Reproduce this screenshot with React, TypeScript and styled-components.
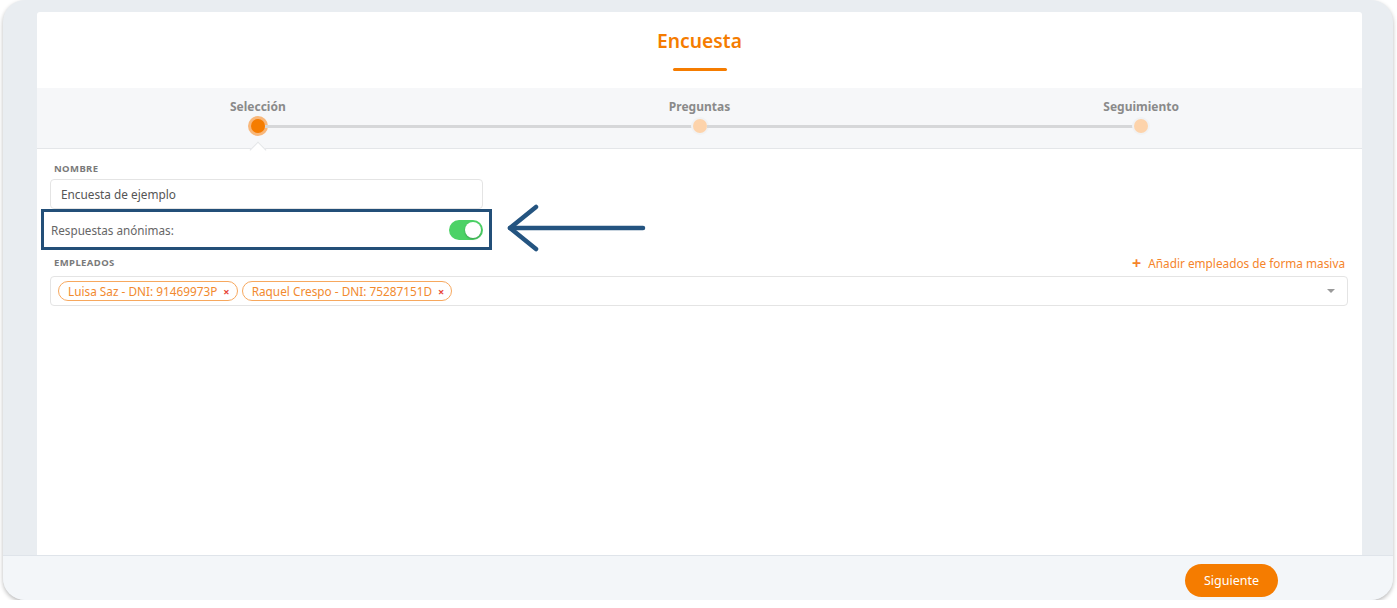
import * as React from 'react'
import styled, { createGlobalStyle } from 'styled-components'

const GlobalStyle = createGlobalStyle`
  body {
    margin: 0;
    background: #ffffff;
    font-family: "Noto Sans", "Open Sans", sans-serif;
  }
`

const Frame = styled.div`
  margin: 0 4px 0 3px;
  width: 1390px;
  height: 600px;
  background: #e9edf1;
  border-radius: 22px;
  box-shadow: 0 2px 4px rgba(0, 0, 0, 0.28);
  display: flex;
  flex-direction: column;
  overflow: hidden;
`

const Body = styled.div`
  flex: 1;
  padding: 12px 31px 0 34px;
  display: flex;
`

const Card = styled.div`
  flex: 1;
  background: #ffffff;
  border-radius: 3px 3px 0 0;
  display: flex;
  flex-direction: column;
`

const TitleBlock = styled.div`
  height: 76px;
  display: flex;
  flex-direction: column;
  align-items: center;
`

const Title = styled.h1`
  margin: 15px 0 0;
  font-size: 19.3px;
  line-height: 27px;
  font-weight: 600;
  color: #f57c00;
`

const TitleBar = styled.div`
  margin-top: 14px;
  width: 54px;
  height: 3px;
  border-radius: 2px;
  background: #f57c00;
`

const Stepper = styled.div`
  height: 60px;
  background: #f6f7f9;
  border-bottom: 1px solid #e4e6e9;
  display: grid;
  grid-template-columns: repeat(3, 1fr);
`

const Step = styled.div<{ $active?: boolean }>`
  position: relative;
  display: flex;
  flex-direction: column;
  align-items: center;
  padding-top: 10px;

  &::after {
    content: '';
    display: ${p => (p.$active ? 'block' : 'none')};
    position: absolute;
    left: 50%;
    bottom: -1px;
    width: 11px;
    height: 11px;
    background: #ffffff;
    border-left: 1px solid #e4e6e9;
    border-top: 1px solid #e4e6e9;
    transform: translate(-50%, 7px) rotate(45deg);
  }
`

const StepLabel = styled.div`
  font-size: 12px;
  line-height: 18px;
  font-weight: 700;
  color: #8a8a8a;
`

const Track = styled.div`
  margin-top: 1px;
  width: 100%;
  height: 18px;
  display: flex;
  align-items: center;
`

const Line = styled.div<{ $hidden?: boolean }>`
  flex: 1;
  height: 3px;
  background: ${p => (p.$hidden ? 'transparent' : '#d6d7d9')};
`

const Dot = styled.div<{ $active?: boolean }>`
  width: 14px;
  height: 14px;
  border-radius: 50%;
  background: ${p => (p.$active ? '#f57c00' : '#fdd3ab')};
  box-shadow: ${p =>
    p.$active ? '0 0 0 3px #f8b77a' : '0 0 0 2px #f1f2f4'};
`

const Form = styled.div`
  padding: 13px 14px 0 13px;
  display: flex;
  flex-direction: column;
`

const FieldLabel = styled.div`
  font-size: 9.5px;
  line-height: 14px;
  font-weight: 700;
  letter-spacing: 0.4px;
  color: #7a7a7a;
  padding-left: 4px;
`

const TextInput = styled.div`
  margin-top: 3px;
  width: 433px;
  height: 30px;
  box-sizing: border-box;
  border: 1px solid #e4e4e4;
  border-radius: 4px;
  padding: 0 10px;
  display: flex;
  align-items: center;
  font-size: 11.8px;
  color: #555;
`

const HighlightRow = styled.div`
  margin-left: -9px;
  height: 41px;
  display: flex;
  align-items: center;
`

const HighlightBox = styled.div`
  width: 451px;
  height: 41px;
  box-sizing: border-box;
  border: 3px solid #234f78;
  padding: 0 6px 0 7px;
  display: flex;
  align-items: center;
  justify-content: space-between;
  font-size: 11.7px;
  color: #666;
`

const Toggle = styled.div`
  width: 34px;
  height: 20px;
  border-radius: 10px;
  background: #4cd266;
  display: flex;
  align-items: center;
  justify-content: flex-end;
  padding: 0 2px;
  box-sizing: border-box;
`

const Knob = styled.div`
  width: 16px;
  height: 16px;
  border-radius: 50%;
  background: #ffffff;
  box-shadow: 0 1px 2px rgba(0, 0, 0, 0.25);
`

const Arrow = styled.svg`
  margin: -6px 0 -3px 14px;
  flex-shrink: 0;
`

const LabelRow = styled.div`
  margin-top: 6px;
  height: 14px;
  display: flex;
  align-items: center;
  justify-content: space-between;
`

const AddLink = styled.div`
  display: flex;
  align-items: center;
  gap: 7px;
  font-size: 11.8px;
  line-height: 14px;
  color: #f5842a;
  padding-right: 3px;
`

const Plus = styled.span`
  font-size: 16px;
  line-height: 14px;
  font-weight: 700;
`

const Select = styled.div`
  margin-top: 6px;
  height: 30px;
  box-sizing: border-box;
  border: 1px solid #e4e4e4;
  border-radius: 4px;
  padding: 0 12px 0 7px;
  display: flex;
  align-items: center;
  gap: 4px;
`

const Tag = styled.div`
  height: 20px;
  box-sizing: border-box;
  border: 1px solid #f7a85e;
  border-radius: 10px;
  padding: 0 7px 0 9px;
  display: flex;
  align-items: center;
  gap: 6px;
  font-size: 11.8px;
  color: #f28a2e;
`

const Remove = styled.span`
  color: #e8483b;
  font-size: 11px;
  font-weight: 700;
`

const Caret = styled.div`
  margin-left: auto;
  width: 0;
  height: 0;
  border-left: 4px solid transparent;
  border-right: 4px solid transparent;
  border-top: 4px solid #9a9a9a;
`

const Footer = styled.div`
  height: 45px;
  box-sizing: border-box;
  background: #f3f6f9;
  border-top: 1px solid #dfe4ea;
  display: flex;
  justify-content: flex-end;
  align-items: flex-start;
  padding: 8px 115px 0 0;
`

const Button = styled.button`
  width: 93px;
  height: 33px;
  border: none;
  border-radius: 17px;
  background: #f57c00;
  color: #ffffff;
  font-family: inherit;
  font-size: 12.5px;
`

const steps = ['Selección', 'Preguntas', 'Seguimiento']
const employees = ['Luisa Saz - DNI: 91469973P', 'Raquel Crespo - DNI: 75287151D']

export default function App() {
  return (
    <>
      <GlobalStyle />
      <Frame>
        <Body>
          <Card>
            <TitleBlock>
              <Title>Encuesta</Title>
              <TitleBar />
            </TitleBlock>
            <Stepper>
              {steps.map((s, i) => (
                <Step key={s} $active={i === 0}>
                  <StepLabel>{s}</StepLabel>
                  <Track>
                    <Line $hidden={i === 0} />
                    <Dot $active={i === 0} />
                    <Line $hidden={i === steps.length - 1} />
                  </Track>
                </Step>
              ))}
            </Stepper>
            <Form>
              <FieldLabel>NOMBRE</FieldLabel>
              <TextInput>Encuesta de ejemplo</TextInput>
              <HighlightRow>
                <HighlightBox>
                  Respuestas anónimas:
                  <Toggle>
                    <Knob />
                  </Toggle>
                </HighlightBox>
                <Arrow width="140" height="50" viewBox="0 0 140 50">
                  <g fill="none" stroke="#245480" strokeWidth="4.5" strokeLinecap="round" strokeLinejoin="round">
                    <path d="M4 25 H137" />
                    <path d="M30 4 L4 25 L30 46" />
                  </g>
                </Arrow>
              </HighlightRow>
              <LabelRow>
                <FieldLabel>EMPLEADOS</FieldLabel>
                <AddLink>
                  <Plus>+</Plus>
                  Añadir empleados de forma masiva
                </AddLink>
              </LabelRow>
              <Select>
                {employees.map(e => (
                  <Tag key={e}>
                    {e}
                    <Remove>×</Remove>
                  </Tag>
                ))}
                <Caret />
              </Select>
            </Form>
          </Card>
        </Body>
        <Footer>
          <Button>Siguiente</Button>
        </Footer>
      </Frame>
    </>
  )
}
